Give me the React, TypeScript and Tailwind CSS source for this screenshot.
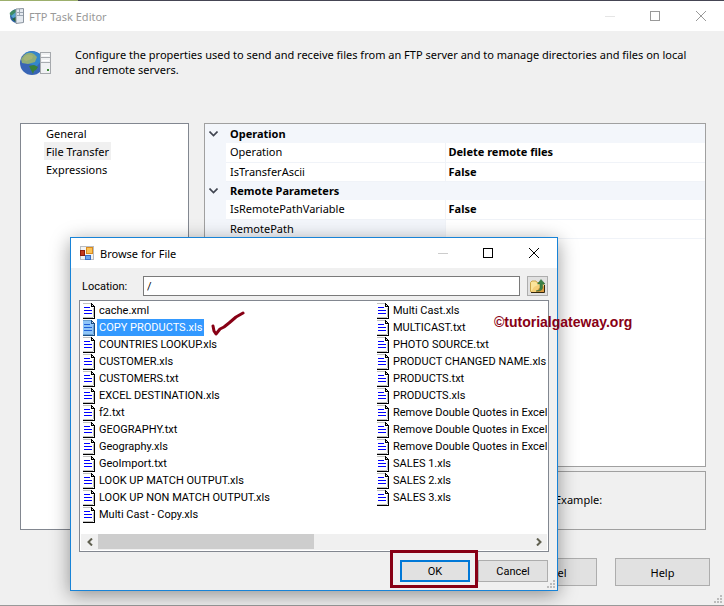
import { useState } from "react";
import clsx from "clsx";

const files = [
  "cache.xml",
  "COPY PRODUCTS.xls",
  "COUNTRIES LOOKUP.xls",
  "CUSTOMER.xls",
  "CUSTOMERS.txt",
  "EXCEL DESTINATION.xls",
  "f2.txt",
  "GEOGRAPHY.txt",
  "Geography.xls",
  "GeoImport.txt",
  "LOOK UP MATCH OUTPUT.xls",
  "LOOK UP NON MATCH OUTPUT.xls",
  "Multi Cast - Copy.xls",
  "Multi Cast.xls",
  "MULTICAST.txt",
  "PHOTO SOURCE.txt",
  "PRODUCT CHANGED NAME.xls",
  "PRODUCTS.txt",
  "PRODUCTS.xls",
  "Remove Double Quotes in Excel",
  "Remove Double Quotes in Excel",
  "Remove Double Quotes in Excel",
  "SALES 1.xls",
  "SALES 2.xls",
  "SALES 3.xls",
];

const pages = ["General", "File Transfer", "Expressions"];

const groups = [
  {
    title: "Operation",
    rows: [
      { name: "Operation", value: "Delete remote files" },
      { name: "IsTransferAscii", value: "False" },
    ],
  },
  {
    title: "Remote Parameters",
    rows: [
      { name: "IsRemotePathVariable", value: "False" },
      { name: "RemotePath", value: "" },
    ],
  },
];

function TitleServerIcon() {
  return (
    <svg width="16" height="16" viewBox="0 0 16 16" aria-hidden="true">
      <path d="M9 1A7 7 0 0 0 9 15Z" fill="#2c5fa0" />
      <path d="M8 1.5Q3 2 1.500 6L4 8 8 7Z" fill="#3d8a63" />
      <path d="M3 8 8 4V9L5 10Z" fill="#55a5cf" />
      <path d="M4 11 8 9V14Z" fill="#23663f" />
      <path d="M8 1 15.500 0.500V14.500L8 15.500Z" fill="#e4e9ef" stroke="#8b949e" />
      <path d="M9 4.500H15M9 7.500H15M11.500 1V8" stroke="#9aa5b1" />
    </svg>
  );
}

function GlobeServerIcon() {
  return (
    <svg width="32" height="26" viewBox="0 0 32 26" aria-hidden="true">
      <circle cx="12" cy="13" r="12" fill="#3865b5" />
      <path d="M5 3Q12-1 20 4L22 10 17 16 9 14Z" fill="#3487cb" />
      <path d="M4 5Q9 1 14 4L17 7 15 12 8 14 2 13 1 9Z" fill="#8fae78" />
      <path d="M5 6Q9 3 13 6L12 9 6 11 3 9Z" fill="#a4b477" />
      <path d="M9 16 14 15 18 17 16 20 14 21 13 24 11 20Z" fill="#39813a" />
      <rect x="20.500" y="2.500" width="10" height="21" fill="#f0f1f3" stroke="#a6a9ad" />
      <path d="M21 7.500H30M21 12.500H30" stroke="#a8abb0" />
      <path d="M22 5.500H29M22 10.500H29" stroke="#fff" />
      <rect x="27" y="19" width="2" height="2" fill="#3d8a35" />
    </svg>
  );
}

function FormIcon() {
  return (
    <svg width="14" height="14" viewBox="0 0 14 14" aria-hidden="true">
      <rect x="0.500" y="0.500" width="13" height="13" fill="#f3f3f3" stroke="#b9bcc2" />
      <rect x="0.500" y="4.500" width="4" height="5" fill="#c2391c" stroke="#8c1c0d" />
      <rect x="6.500" y="1.500" width="6" height="6" fill="#fbc255" stroke="#d98b1f" />
      <rect x="5.500" y="9.500" width="5" height="4" fill="#6ea5ee" stroke="#3a6fc4" />
    </svg>
  );
}

function FolderUpIcon() {
  return (
    <svg width="16" height="14" viewBox="0 0 16 14" aria-hidden="true">
      <path d="M0.500 12.500V3.500L2 2H6L7 3.500H13.500V12.500Z" fill="#fbe49a" stroke="#c9a44a" />
      <path d="M1 13 4 8 8 6H14V13Z" fill="#f5cf78" />
      <path d="M6 13 9 9 14 7V13Z" fill="#dd9a3c" />
      <path d="M1 13.500H14.500V6" stroke="#33270d" fill="none" />
      <path d="M6 12Q10 12 10 9V5H7.500L11 0.500 15 5H12.500V9Q12 12.500 6 12Z" fill="#3a8145" stroke="#2a6838" strokeWidth="0.500" />
    </svg>
  );
}

function FileIcon({ selected }: { selected: boolean }) {
  return (
    <svg className="shrink-0" width="12" height="16" viewBox="0 0 12 16" shapeRendering="crispEdges" aria-hidden="true">
      <path d="M0 0H8L12 4V16H0Z" fill={selected ? "#8fc6f8" : "#fff"} />
      <path d="M0 0.500H8M0 14.500H10M10.500 5V14" stroke={selected ? "#6a9fd0" : "#c0c0c0"} fill="none" />
      <path d="M8 0H9V1H10V2H11V3H12V16H0V15H11V4H8Z" fill={selected ? "#1a4f86" : "#000"} />
      <path d="M9 2H10V3H9Z" fill="#ddd" />
      <path d="M1 4.500H7M1 7.500H9M1 10.500H9" stroke={selected ? "#2060d8" : "#0000ff"} />
    </svg>
  );
}

function Grip() {
  return (
    <svg className="absolute right-0.5 bottom-0.5" width="8" height="8" viewBox="0 0 8 8" aria-hidden="true">
      <path d="M6 0h2v2H6zM3 3h2v2H3zM6 3h2v2H6zM0 6h2v2H0zM3 6h2v2H3zM6 6h2v2H6z" fill="#bcbcbc" />
    </svg>
  );
}

function WindowButtons({ dimmed }: { dimmed: boolean }) {
  return (
    <div className={clsx("flex h-full", dimmed ? "text-[#999999]" : "text-black")}>
      <button type="button" aria-label="Minimize" disabled className="flex w-[45px] items-center justify-center">
        <svg width="10" height="10" viewBox="0 0 10 10"><path d="M0 5.500H10" stroke={dimmed ? "#e5e5e5" : "#cccccc"} /></svg>
      </button>
      <button type="button" aria-label="Maximize" className="flex w-[46px] items-center justify-center">
        <svg width="10" height="10" viewBox="0 0 10 10"><rect x="0.500" y="0.500" width="9" height="9" fill="none" stroke="currentColor" /></svg>
      </button>
      <button type="button" aria-label="Close" className="flex w-[46px] items-center justify-center">
        <svg width="10" height="10" viewBox="0 0 10 10"><path d="M0 0 10 10M10 0 0 10" stroke="currentColor" /></svg>
      </button>
    </div>
  );
}

function PropertyGrid() {
  return (
    <div className="flex-1 border border-[#a0a0a0] bg-white">
      <table className="w-full table-fixed border-collapse">
        <colgroup>
          <col className="w-[21px]" />
          <col className="w-[219px]" />
          <col />
        </colgroup>
        {groups.map((group) => (
          <tbody key={group.title}>
            <tr className="h-[19px] bg-[#f3f6fb]">
              <td className="p-0">
                <button type="button" aria-label={`Collapse ${group.title}`} className="flex h-[18px] w-full items-center justify-center pr-1">
                  <svg width="9" height="6" viewBox="0 0 9 6"><path d="M0.500 0.500 4.500 4.500 8.500 0.500" fill="none" stroke="#404550" strokeWidth="1.600" /></svg>
                </button>
              </td>
              <th colSpan={2} className="p-0 pl-1 text-left leading-[18px] font-bold">{group.title}</th>
            </tr>
            {group.rows.map((row) => (
              <tr key={row.name} className="h-[19px]">
                <td className="bg-[#f3f6fb] p-0" />
                <td className={clsx("border-r border-b border-[#f0f3f8] p-0 pl-1 leading-[18px]", row.value === "" && "bg-[#f3f6fb]")}>{row.name}</td>
                <td className="border-b border-[#f0f3f8] p-0 pl-[3px] leading-[18px] font-bold">{row.value}</td>
              </tr>
            ))}
          </tbody>
        ))}
      </table>
    </div>
  );
}

function BrowseDialog() {
  const [selected, setSelected] = useState(1);
  const [location, setLocation] = useState("/");

  return (
    <div role="dialog" aria-label="Browse for File" className="absolute top-[237px] left-[70px] w-[488px] border border-[#1883d7] bg-[#f0f0f0] shadow-[0_4px_18px_rgba(0,0,0,0.4)]">
      <div className="flex h-[30px] items-center bg-white pl-[9px]">
        <FormIcon />
        <span className="ml-1.5 flex-1">Browse for File</span>
        <WindowButtons dimmed={false} />
      </div>
      <div className="flex h-8 items-center pt-1 pr-[9px] pl-[11px]">
        <label htmlFor="location" className="w-[61px] font-['Roboto',sans-serif]">Location:</label>
        <input id="location" value={location} onChange={(e) => setLocation(e.target.value)} className="h-5 min-w-0 flex-1 border border-[#7a7a7a] bg-white px-[3px] font-['Roboto',sans-serif] outline-none" />
        <button type="button" aria-label="Up one level" className="ml-[7px] flex h-5 w-[21px] items-center justify-center border border-[#adadad] bg-[#e1e1e1]">
          <FolderUpIcon />
        </button>
      </div>
      <div className="mx-2 border border-[#828790] bg-white p-px">
        <div className="relative overflow-hidden pb-[11px]">
          <div className="grid grid-flow-col auto-cols-[294px] grid-rows-[repeat(13,17px)] pl-0.5 font-['Roboto',sans-serif]">
            {files.map((file, i) => (
              <button key={i} type="button" onClick={() => setSelected(i)} className="flex items-center text-left whitespace-nowrap">
                <FileIcon selected={i === selected} />
                <span className={clsx("ml-0.5 px-0.5 pt-px leading-4", i === selected && "bg-[#3399ff] text-white")}>{file}</span>
              </button>
            ))}
          </div>
          <svg className="absolute top-2 left-[128px]" width="36" height="28" viewBox="0 0 36 28" aria-hidden="true">
            <path d="M4 16 5 21 7 24 11 19 15 17 20 13 27 7 34 3" fill="none" stroke="#880015" strokeWidth="3" strokeLinecap="round" strokeLinejoin="round" />
          </svg>
        </div>
        <div className="flex h-4 items-center bg-[#f0f0f0]">
          <button type="button" aria-label="Scroll left" className="flex h-full w-[17px] items-center justify-center">
            <svg width="6" height="8" viewBox="0 0 6 8"><path d="M5 0.500 1.500 4 5 7.500" fill="none" stroke="#606050" strokeWidth="2" /></svg>
          </button>
          <div className="h-full flex-1">
            <div className="h-[15px] w-1/2 bg-[#cdcdcd]" />
          </div>
          <button type="button" aria-label="Scroll right" className="flex h-full w-[17px] items-center justify-center">
            <svg width="6" height="8" viewBox="0 0 6 8"><path d="M1 0.500 4.500 4 1 7.500" fill="none" stroke="#606050" strokeWidth="2" /></svg>
          </button>
        </div>
      </div>
      <div className="flex justify-end gap-2 pt-2 pr-[9px] pb-2 font-['Roboto',sans-serif]">
        <button type="button" className="relative h-[22px] w-[70px] border-2 border-[#0078d7] bg-[#e1e1e1]">
          OK
          <span className="pointer-events-none absolute -top-3 -right-2.5 -bottom-2 -left-3 border-3 border-[#880015]" />
        </button>
        <button type="button" className="h-[22px] w-[70px] border border-[#adadad] bg-[#e1e1e1]">Cancel</button>
      </div>
      <Grip />
    </div>
  );
}

export default function App() {
  const [page, setPage] = useState("File Transfer");

  return (
    <div className="relative flex min-h-screen flex-col border-b border-[#999999] bg-[#f0f0f0] font-['Noto_Sans',sans-serif] text-[11px] leading-[15px] text-black">
      <div className="flex h-px">
        <div className="w-[78px] bg-[#9caf6c]" />
        <div className="flex-1 bg-[#454553]" />
      </div>
      <header className="flex h-[30px] items-center bg-white pl-2">
        <TitleServerIcon />
        <h1 className="ml-[5px] flex-1 text-[#999999]">FTP Task Editor</h1>
        <WindowButtons dimmed />
      </header>
      <div className="flex h-[92px] items-start gap-[23px] pt-4 pr-6 pl-5">
        <div className="pt-[3px]">
          <GlobeServerIcon />
        </div>
        <p className="flex-1">
          Configure the properties used to send and receive files from an FTP server and to manage directories and files on local and remote servers.
        </p>
      </div>
      <main className="flex flex-1 gap-[15px] pr-[18px] pl-5">
        <nav className="flex w-[169px] flex-col items-start border border-[#828790] bg-white pl-[23px]">
          {pages.map((name) => (
            <button key={name} type="button" onClick={() => setPage(name)} className={clsx("h-[18px] px-0.5", page === name && "bg-[#f0f0f0]")}>
              {name}
            </button>
          ))}
        </nav>
        <div className="flex flex-1 flex-col gap-1">
          <PropertyGrid />
          <div className="h-[59px] border border-[#a0a0a0] pt-5 pl-[350px]">Example:</div>
        </div>
      </main>
      <footer className="flex justify-end gap-[18px] pt-7 pr-3.5 pb-[19px]">
        <button type="button" className="h-7 w-[95px] border border-[#adadad] bg-[#e1e1e1]">Cancel</button>
        <button type="button" className="h-7 w-[95px] border border-[#adadad] bg-[#e1e1e1]">Help</button>
      </footer>
      <Grip />
      <BrowseDialog />
      <p className="absolute top-[314px] left-[494px] font-['Liberation_Sans',sans-serif] text-[14px] leading-4 font-bold text-[#880015]">©tutorialgateway.org</p>
    </div>
  );
}
